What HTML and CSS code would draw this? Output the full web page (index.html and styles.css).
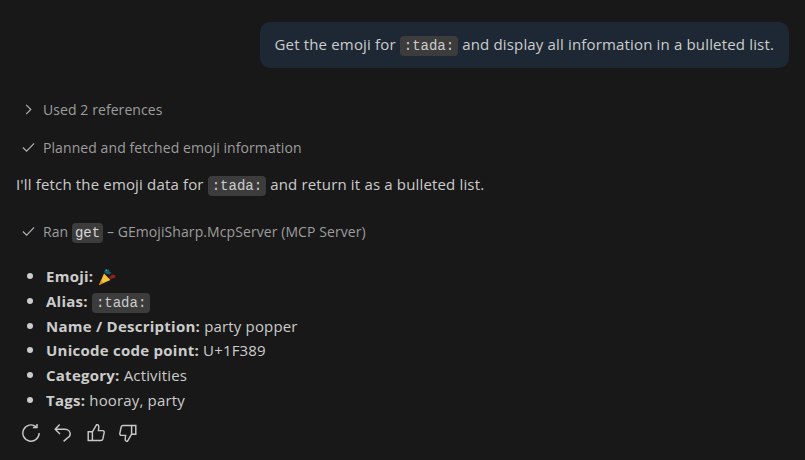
FILE: index.html
```html
<!DOCTYPE html>
<html lang="en">
<head>
    <meta charset="UTF-8">
    <title>Chat</title>
    <link rel="stylesheet" href="styles.css">
</head>
<body>
    <div class="chat">
        <div class="user-row">
            <div class="bubble">Get the emoji for <code>:tada:</code> and display all information in a bulleted list.</div>
        </div>

        <div class="status first">
            <svg class="ico" viewBox="0 0 16 16"><path d="M5.500 3 10.500 8 5.500 13"/></svg>
            <span>Used 2 references</span>
        </div>
        <div class="status planned">
            <svg class="ico" viewBox="0 0 16 16"><path d="M2 8 6 12 14 3.500"/></svg>
            <span>Planned and fetched emoji information</span>
        </div>

        <p class="intro">I'll fetch the emoji data for <code>:tada:</code> and return it as a bulleted list.</p>

        <div class="status ran">
            <svg class="ico" viewBox="0 0 16 16"><path d="M2 8 6 12 14 3.500"/></svg>
            <span>Ran <code class="tool">get</code> – GEmojiSharp.McpServer (MCP Server)</span>
        </div>

        <ul class="info">
            <li><b>Emoji:</b> <svg class="tada" viewBox="0 0 18 18">
                <path fill="#f7c23c" d="M1 17 6 5.500 12.500 12Z"/>
                <path fill="#d98f20" d="M1 17 3 12.500 5.500 15Z"/>
                <path fill="#15606b" d="M6 4 8 1l1.500 1 1.500-1 .5 3 2 .5-2 2-3-.5Z"/>
                <path fill="#8e1f1f" d="M11 9l3-2.500 3 .5 .5 2.500-3 1-2 .5Z"/>
                <path fill="#33a0a8" d="M7.500 1.500h1.500v1.500h-1.500Z"/>
            </svg></li>
            <li><b>Alias:</b> <code>:tada:</code></li>
            <li><b>Name / Description:</b> party popper</li>
            <li><b>Unicode code point:</b> U+1F389</li>
            <li><b>Category:</b> Activities</li>
            <li><b>Tags:</b> hooray, party</li>
        </ul>

        <div class="actions">
            <svg viewBox="0.500 0.500 15 15"><path d="M14.800 8A6.800 6.800 0 1 1 12.200 2.700M13 .2V3.400H9.600"/></svg>
            <svg viewBox="0.500 0.500 15 15"><path d="M5.200 1 1.500 4.800 5.500 8.800M1.500 4.800H9.500c3 0 4.500 2 4.500 4 0 1.800-1.200 2.800-2.500 3.500L8.500 15"/></svg>
            <svg viewBox="0.500 0.500 15 15"><path d="M5 7 8.500 1c1.500 0 2 1 1.800 2.200L10 6h3.500c1 0 1.500.8 1.300 1.700l-1.100 5.300c-.2.800-.8 1.300-1.600 1.300H5ZM5 7H1.500v7.300H5"/></svg>
            <svg viewBox="0.500 0.500 15 15"><path d="M11 9 7.500 15c-1.500 0-2-1-1.800-2.200L6 10H2.500c-1 0-1.500-.8-1.300-1.700l1.100-5.300c.2-.8.800-1.300 1.600-1.300H11ZM11 9h3.500V1.700H11"/></svg>
        </div>
    </div>
</body>
</html>
```

FILE: styles.css
```css
body{
    margin: 0;
    background-color: #181818;
    color: #cccccc;
    font-family: "Open Sans", "Noto Sans", sans-serif;
    font-size: 15px;
    letter-spacing: 0.16px;
    height: 460px;
    overflow: hidden;
}

.chat{
    padding: 22px 16px 0 16px;
}

.user-row{
    display: flex;
    justify-content: flex-end;
}

.bubble{
    background-color: #1d2834;
    border-radius: 10px;
    height: 46px;
    line-height: 45px;
    padding: 0 15px;
    white-space: nowrap;
}

code{
    font-family: "Liberation Mono", monospace;
    font-size: 14px;
    letter-spacing: 0;
    background-color: #3c3c3c;
    border-radius: 4px;
    padding: 2px 4px;
}

.status{
    display: flex;
    align-items: center;
    gap: 7px;
    height: 22px;
    color: #9d9d9d;
    font-size: 14px;
    letter-spacing: 0.08px;
    padding-left: 5px;
}

.status .ico{
    width: 15px;
    height: 15px;
    fill: none;
    stroke: #b5b5b5;
    stroke-width: 1.200;
}

.first{
    margin-top: 30px;
}

.planned{
    margin-top: 16px;
}

.intro{
    margin: 15px 0 0 0;
    line-height: 22px;
}

.ran{
    margin-top: 23px;
}

.tool{
    color: #d8d8d8;
    padding: 2px 3px;
}

.info{
    margin: 21px 0 0 0;
    padding: 0 0 0 30px;
    list-style: disc;
}

.info li{
    height: 24.800px;
    line-height: 24.800px;
}

.info li::marker{
    font-size: 18px;
}

.info b{
    font-weight: 700;
    letter-spacing: 0.25px;
}

.tada{
    width: 18px;
    height: 18px;
    margin-left: 1px;
    vertical-align: -4px;
}

.actions{
    display: flex;
    gap: 14.500px;
    margin: 12px 0 0 5.500px;
}

.actions svg{
    width: 18px;
    height: 18px;
    fill: none;
    stroke: #c8c8c8;
    stroke-width: 1.200;
}
```
